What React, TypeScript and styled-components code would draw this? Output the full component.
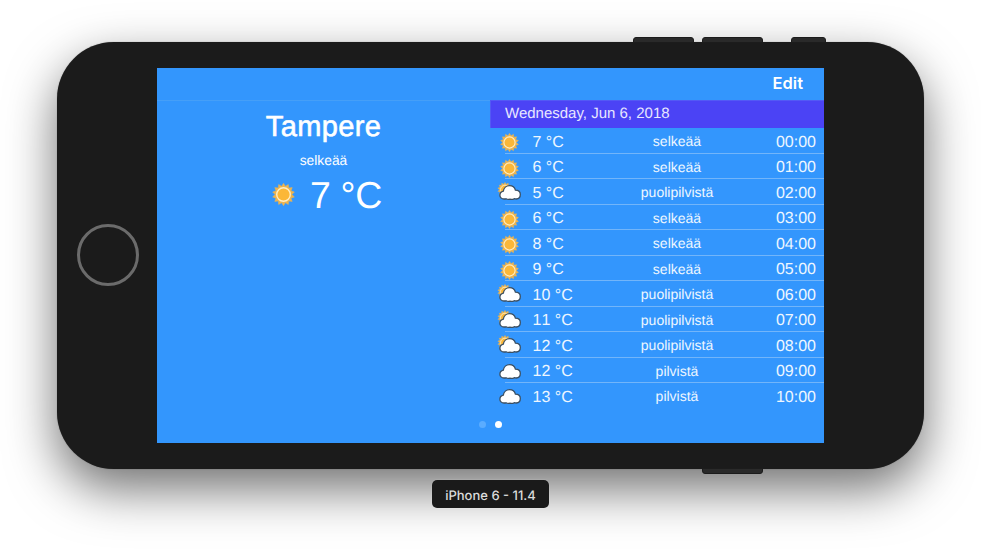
import React from 'react';
import styled, { createGlobalStyle } from 'styled-components';

const GlobalStyle = createGlobalStyle`
  *, *::before, *::after { box-sizing: border-box; }
  html, body { margin: 0; background: #fff; }
  body { font-family: "Liberation Sans", Arial, Helvetica, sans-serif; color: #fff; text-rendering: geometricPrecision; }
`;

const Stage = styled.main`
  width: 981px;
  height: 559px;
  padding-top: 42px;
  overflow: hidden;
  display: flex;
  flex-direction: column;
  align-items: center;
  background: #fff;
`;

const Phone = styled.section`
  position: relative;
  width: 867px;
  height: 427px;
  flex: none;
  padding: 26px 100px 26px 20px;
  display: flex;
  align-items: center;
  gap: 18px;
  border-radius: 57px;
  background: #1b1b1b;
  box-shadow: 0 0 1px rgba(0, 0, 0, 0.45), 0 20px 50px rgba(0, 0, 0, 0.56);
`;

const SideButton = styled.span<{ $left: number; $width: number; $bottom?: boolean }>`
  position: absolute;
  left: ${(p) => p.$left}px;
  ${(p) => (p.$bottom ? 'bottom: -5px;' : 'top: -5px;')}
  width: ${(p) => p.$width}px;
  height: 6px;
  border: 1px solid #1c1c1c;
  border-radius: ${(p) => (p.$bottom ? '0 0 3px 3px' : '3px 3px 0 0')};
  background: #2a2a2a;
`;

const HomeButton = styled.div`
  width: 62px;
  height: 62px;
  flex: none;
  margin-bottom: 1px;
  border: 3px solid #6b6b6b;
  border-radius: 50%;
`;

const Screen = styled.div`
  width: 667px;
  height: 375px;
  flex: none;
  display: flex;
  flex-direction: column;
  background: #3396fd;
`;

const NavBar = styled.header`
  height: 33px;
  flex: none;
  padding: 0 21px 3px 0;
  display: flex;
  align-items: center;
  justify-content: flex-end;
  border-bottom: 1px solid #459ff8;
`;

const EditButton = styled.button`
  padding: 0;
  border: 0;
  background: none;
  color: #fff;
  font: 600 16.5px/20px Inter, sans-serif;
  letter-spacing: 0;
`;

const Panes = styled.div`
  flex: 1;
  min-height: 0;
  display: grid;
  grid-template-columns: 333px 334px;
`;

const Current = styled.section`
  padding-top: 9px;
  display: flex;
  flex-direction: column;
  align-items: center;
`;

const City = styled.h1`
  margin: 0;
  font-size: 29px;
  line-height: 34px;
  font-weight: 400;
  letter-spacing: 0.35px;
  -webkit-text-stroke: 0.6px #fff;
`;

const Summary = styled.p`
  margin: 8px 0 0;
  font-size: 13.8px;
  line-height: 18px;
`;

const CurrentTemp = styled.div`
  margin: 3px 0 0 7px;
  display: flex;
  align-items: center;
  gap: 15px;
  font-size: 37.5px;
  line-height: 44px;
  letter-spacing: -0.3px;

  svg { position: relative; top: -1px; }
`;

const Forecast = styled.section`
  margin-top: -1px;
`;

const DateHeader = styled.h2`
  height: 28px;
  margin: 0;
  padding-left: 14px;
  background: #4b43f5;
  border: solid #5359f5;
  border-width: 1px 0 0 1px;
  color: #e8e7ff;
  font-size: 15px;
  font-weight: 400;
  line-height: 26px;
`;

const Hour = styled.li`
  height: 25.5px;
  padding: 2.5px 8px 0 8px;
  display: grid;
  grid-template-columns: 34.5px 94.5px 100px 1fr;
  align-items: center;
  font-size: 16px;
  line-height: 24px;
  font-kerning: none;
  color: #eef6ff;
  background: linear-gradient(#72b5fa, #72b5fa) 15px 100% / 100% 1px no-repeat;

  &:last-child { background: none; }
`;

const Hours = styled.ul`
  margin: 0;
  padding: 0;
  list-style: none;
`;

const Condition = styled.span`
  font-size: 14px;
  line-height: 20px;
  text-align: center;
  padding-bottom: 3px;
`;

const Time = styled.time`
  text-align: right;
`;

const Dots = styled.nav`
  height: 37px;
  flex: none;
  display: flex;
  justify-content: center;
  align-items: center;
  gap: 9px;
`;

const Dot = styled.span<{ $on?: boolean }>`
  width: 7px;
  height: 7px;
  border-radius: 50%;
  background: ${(p) => (p.$on ? '#fff' : '#5aacff')};
`;

const DeviceLabel = styled.footer`
  width: 117px;
  height: 28px;
  margin-top: 11px;
  position: relative;
  border-radius: 5px;
  background: #1a1a1a;
  box-shadow: 0 0 1px rgba(255, 255, 255, 0.7);
  color: #dcdcdc;
  font: 500 13px/32px Inter, sans-serif;
  text-align: center;
`;

const WeatherSvg = styled.svg`
  display: block;
  overflow: visible;
  flex: none;
`;

type Sky = 'sun' | 'partly' | 'cloud';

const rays = Array.from({ length: 28 }, (_, i) => {
  const angle = (i * Math.PI) / 14 - Math.PI / 2;
  const radius = i % 2 === 0 ? 9.7 : 7.3;
  return `${(radius * Math.cos(angle)).toFixed(2)},${(radius * Math.sin(angle)).toFixed(2)}`;
}).join(' ');

const SunShape = () => (
  <>
    <polygon points={rays} fill="#edb450" stroke="#edb450" strokeWidth=".4" />
    <circle r="5.9" fill="#fbb738" stroke="#ffeec4" strokeWidth="1.2" />
  </>
);

const SunIcon = ({ size }: { size: number }) => (
  <WeatherSvg width={size} height={size} viewBox="-10 -10 20 20">
    <SunShape />
  </WeatherSvg>
);

const CloudIcon = ({ withSun }: { withSun: boolean }) => (
  <WeatherSvg width="24" height="20" viewBox="0 0 24 20">
    {withSun && (
      <g transform="translate(7 7.7) scale(.76)">
        <SunShape />
      </g>
    )}
    <path
      d="M6 17C3.500 17 1.900 15.300 1.900 13.200 1.900 11.200 3.200 9.700 5.300 9.200 5.800 6 8.400 3.700 11.500 3.700 14.400 3.700 16.700 5.300 17.400 8.200 20.500 8.200 22.300 10.100 22.300 12.600 22.300 15.200 20.600 17 18.300 17 17.500 17 16.800 16.900 16.200 16.700 14.900 17.500 13.300 17.600 12 17.100 10.600 17.600 9.200 17.500 8 16.800 7.400 17 6.700 17 6 17Z"
      fill="#fff"
      stroke="#3c4f61"
      strokeWidth="1.3"
    />
  </WeatherSvg>
);

const IconCell = styled.span<{ $sky: Sky }>`
  display: block;
  padding-bottom: ${(p) => (p.$sky === 'sun' ? 0 : 3)}px;
  padding-left: ${(p) => (p.$sky === 'sun' ? 1.5 : 0)}px;
`;

const hours: [string, Sky, string, string][] = [
  ['7 °C', 'sun', 'selkeää', '00:00'],
  ['6 °C', 'sun', 'selkeää', '01:00'],
  ['5 °C', 'partly', 'puolipilvistä', '02:00'],
  ['6 °C', 'sun', 'selkeää', '03:00'],
  ['8 °C', 'sun', 'selkeää', '04:00'],
  ['9 °C', 'sun', 'selkeää', '05:00'],
  ['10 °C', 'partly', 'puolipilvistä', '06:00'],
  ['11 °C', 'partly', 'puolipilvistä', '07:00'],
  ['12 °C', 'partly', 'puolipilvistä', '08:00'],
  ['12 °C', 'cloud', 'pilvistä', '09:00'],
  ['13 °C', 'cloud', 'pilvistä', '10:00'],
];

export default function App() {
  return (
    <Stage>
      <GlobalStyle />
      <Phone>
        <SideButton $left={576} $width={61} />
        <SideButton $left={645} $width={61} />
        <SideButton $left={734} $width={35} />
        <SideButton $left={645} $width={61} $bottom />
        <HomeButton />
        <Screen>
          <NavBar>
            <EditButton>Edit</EditButton>
          </NavBar>
          <Panes>
            <Current>
              <City>Tampere</City>
              <Summary>selkeää</Summary>
              <CurrentTemp>
                <SunIcon size={23} />
                <span>7 °C</span>
              </CurrentTemp>
            </Current>
            <Forecast>
              <DateHeader>Wednesday, Jun 6, 2018</DateHeader>
              <Hours>
                {hours.map(([temp, sky, condition, time]) => (
                  <Hour key={time}>
                    <IconCell $sky={sky}>
                      {sky === 'sun' ? <SunIcon size={19} /> : <CloudIcon withSun={sky === 'partly'} />}
                    </IconCell>
                    <span>{temp}</span>
                    <Condition>{condition}</Condition>
                    <Time>{time}</Time>
                  </Hour>
                ))}
              </Hours>
            </Forecast>
          </Panes>
          <Dots>
            <Dot />
            <Dot $on />
          </Dots>
        </Screen>
      </Phone>
      <DeviceLabel>iPhone 6 - 11.4</DeviceLabel>
    </Stage>
  );
}
